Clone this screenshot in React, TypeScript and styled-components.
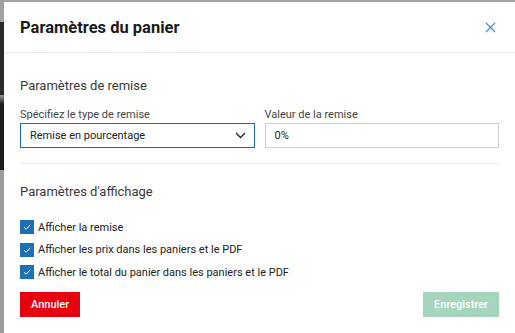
import React from 'react';
import styled, { createGlobalStyle } from 'styled-components';

const GlobalStyle = createGlobalStyle`
  html, body {
    margin: 0;
    padding: 0;
    overflow: hidden;
  }
  body {
    font-family: Roboto, 'Noto Sans', sans-serif;
  }
`;

const Backdrop = styled.div`
  width: 515px;
  height: 333px;
  padding: 2px 0 0 4px;
  box-sizing: border-box;
  display: flex;
  background: linear-gradient(
    to bottom,
    #a2a2a2 0px,
    #a2a2a2 22px,
    #2a2a2a 22px,
    #2a2a2a 95px,
    #9a9a9a 95px,
    #1e1e1e 104px,
    #1e1e1e 170px,
    #9c9c9c 170px,
    #9c9c9c 333px
  );
`;

const Dialog = styled.div`
  flex: 1;
  background: #fff;
  display: flex;
  flex-direction: column;
`;

const Header = styled.div`
  height: 50px;
  padding: 0 16px;
  display: flex;
  align-items: center;
  justify-content: space-between;
  border-bottom: 1px solid #e8e8e8;
`;

const Title = styled.h1`
  margin: 0;
  font-size: 16.5px;
  font-weight: 700;
  color: #1a1a1a;
`;

const CloseButton = styled.button`
  width: 20px;
  height: 20px;
  padding: 0;
  margin-right: -1px;
  border: none;
  background: none;
  display: flex;
  align-items: center;
  justify-content: center;
  cursor: pointer;
`;

const Body = styled.div`
  padding: 0 16px;
  display: flex;
  flex-direction: column;
`;

const SectionTitle = styled.h2<{ $top: number }>`
  margin: ${p => p.$top}px 0 0;
  font-size: 13px;
  line-height: 20px;
  font-weight: 400;
  color: #3a3a3a;
`;

const FieldRow = styled.div`
  margin-top: 11px;
  display: grid;
  grid-template-columns: 1fr 1fr;
  gap: 10px;
`;

const Field = styled.div`
  display: flex;
  flex-direction: column;
`;

const Label = styled.label`
  font-size: 11px;
  line-height: 16px;
  color: #444;
`;

const Box = styled.div<{ $focused?: boolean }>`
  height: 25px;
  box-sizing: border-box;
  border: 1.5px solid ${p => (p.$focused ? '#176db2' : '#cfcfcf')};
  padding: 0 8px 0 9px;
  display: flex;
  align-items: center;
  justify-content: space-between;
  font-size: 11px;
  color: #222;
`;

const Divider = styled.hr`
  margin: 15px 0 0;
  border: 0;
  border-top: 1px solid #ececec;
`;

const CheckList = styled.div`
  margin-top: 14px;
  display: flex;
  flex-direction: column;
`;

const CheckRow = styled.label`
  height: 22.5px;
  display: flex;
  align-items: center;
  gap: 4px;
  font-size: 11px;
  color: #222;
`;

const CheckBox = styled.span`
  width: 14px;
  height: 14px;
  background: #1b70b6;
  display: flex;
  align-items: center;
  justify-content: center;
`;

const Footer = styled.div`
  margin-top: 8px;
  padding: 0 16px;
  display: flex;
  justify-content: space-between;
`;

const Button = styled.button<{ $variant: 'danger' | 'primary' }>`
  height: 25px;
  padding: 0 11px;
  border: none;
  font-family: inherit;
  font-size: 11px;
  font-weight: 500;
  color: #fff;
  background: ${p => (p.$variant === 'danger' ? '#e8000f' : '#a5d5bd')};
  cursor: pointer;
`;

const Check = () => (
  <svg width="10" height="10" viewBox="0 0 10 10">
    <path d="M2 5.2 L4.2 7.3 L8.2 2.8" fill="none" stroke="#fff" strokeWidth="1" />
  </svg>
);

const options = [
  'Afficher la remise',
  'Afficher les prix dans les paniers et le PDF',
  'Afficher le total du panier dans les paniers et le PDF',
];

export default function App() {
  return (
    <>
      <GlobalStyle />
      <Backdrop>
        <Dialog>
          <Header>
            <Title>Paramètres du panier</Title>
            <CloseButton aria-label="Fermer">
              <svg width="11" height="11" viewBox="0 0 11 11">
                <path d="M1 1 L10 10 M10 1 L1 10" stroke="#3b96d8" strokeWidth="1.2" />
              </svg>
            </CloseButton>
          </Header>
          <Body>
            <SectionTitle $top={23}>Paramètres de remise</SectionTitle>
            <FieldRow>
              <Field>
                <Label>Spécifiez le type de remise</Label>
                <Box $focused>
                  <span>Remise en pourcentage</span>
                  <svg width="11" height="7" viewBox="0 0 11 7">
                    <path d="M1 1 L5.5 5.5 L10 1" fill="none" stroke="#222" strokeWidth="1.3" />
                  </svg>
                </Box>
              </Field>
              <Field>
                <Label>Valeur de la remise</Label>
                <Box>0%</Box>
              </Field>
            </FieldRow>
            <Divider />
            <SectionTitle $top={18}>Paramètres d'affichage</SectionTitle>
            <CheckList>
              {options.map(o => (
                <CheckRow key={o}>
                  <CheckBox>
                    <Check />
                  </CheckBox>
                  {o}
                </CheckRow>
              ))}
            </CheckList>
          </Body>
          <Footer>
            <Button $variant="danger">Annuler</Button>
            <Button $variant="primary">Enregistrer</Button>
          </Footer>
        </Dialog>
      </Backdrop>
    </>
  );
}
